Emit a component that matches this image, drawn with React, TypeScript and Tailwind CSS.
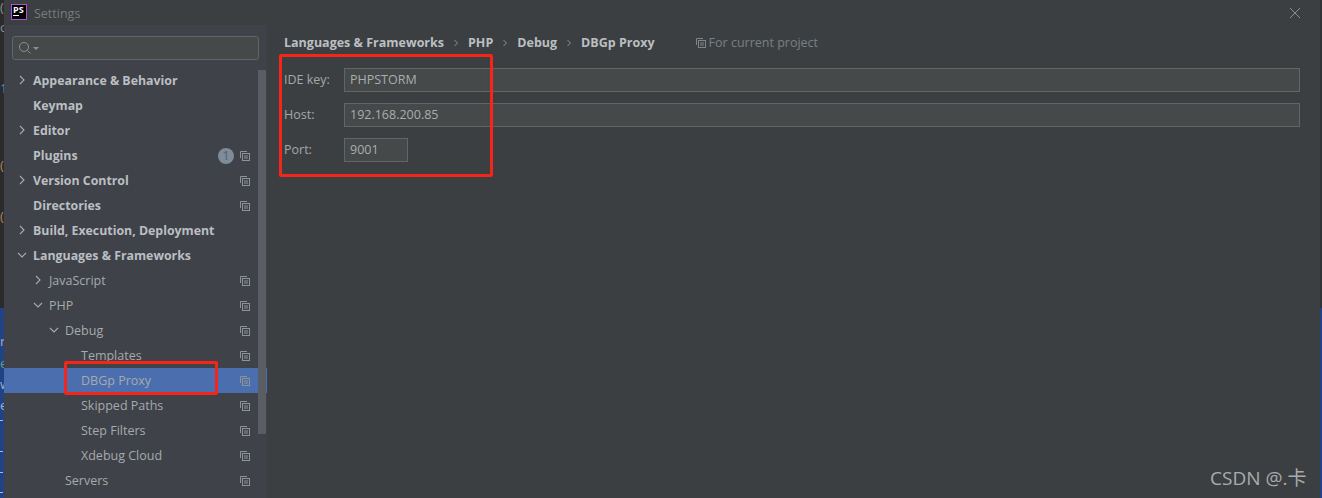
type Row = {
  label: string;
  indent: number;
  bold?: boolean;
  arrow?: "right" | "down";
  copy?: boolean;
  badge?: string;
  selected?: boolean;
};

const rows: Row[] = [
  { label: "Appearance & Behavior", indent: 33, bold: true, arrow: "right" },
  { label: "Keymap", indent: 33, bold: true },
  { label: "Editor", indent: 33, bold: true, arrow: "right" },
  { label: "Plugins", indent: 33, bold: true, copy: true, badge: "1" },
  { label: "Version Control", indent: 33, bold: true, arrow: "right", copy: true },
  { label: "Directories", indent: 33, bold: true, copy: true },
  { label: "Build, Execution, Deployment", indent: 33, bold: true, arrow: "right" },
  { label: "Languages & Frameworks", indent: 33, bold: true, arrow: "down" },
  { label: "JavaScript", indent: 49, arrow: "right", copy: true },
  { label: "PHP", indent: 49, arrow: "down", copy: true },
  { label: "Debug", indent: 65, arrow: "down", copy: true },
  { label: "Templates", indent: 81, copy: true },
  { label: "DBGp Proxy", indent: 81, copy: true, selected: true },
  { label: "Skipped Paths", indent: 81, copy: true },
  { label: "Step Filters", indent: 81, copy: true },
  { label: "Xdebug Cloud", indent: 81, copy: true },
  { label: "Servers", indent: 65, copy: true },
];

// editor text cut off by the dialog's left edge
const editorBits = [
  { top: -2, text: "(", color: "text-[#8a8f92]" },
  { top: 18, text: "c", color: "text-[#8a8f92]" },
  { top: 79, text: "1", color: "text-[#5f8fb5]" },
  { top: 156, text: "(", color: "text-[#b5835a]" },
  { top: 207, text: "(", color: "text-[#b5835a]" },
  { top: 332, text: "r", color: "text-[#b9a6b5]" },
  { top: 354, text: "e", color: "text-[#6a9a7a]" },
  { top: 375, text: "w", color: "text-[#9fb0d0]" },
  { top: 396, text: "e", color: "text-[#9fb0d0]" },
];

function CopyIcon({ className }: { className?: string }) {
  return (
    <svg width="10" height="10" viewBox="0 0 10 10" fill="none" stroke="currentColor" strokeWidth="1" className={className}>
      <path d="M0.5 7V0.5H7" />
      <rect x="2.5" y="2.5" width="7" height="7" />
      <path d="M4 5h4M4 7h4" />
    </svg>
  );
}

function Chevron({ dir }: { dir: "right" | "down" }) {
  return (
    <svg width="10" height="10" viewBox="0 0 10 10" fill="none" stroke="#a8acae" strokeWidth="1.1">
      {dir === "right" ? <path d="M3 1l4 4-4 4" /> : <path d="M1 3l4 4 4-4" />}
    </svg>
  );
}

function Sep() {
  return (
    <svg width="6" height="8" viewBox="0 0 6 8" fill="none" stroke="#8b8e90" strokeWidth="1" className="mx-[9px]">
      <path d="M1.5 1l3 3-3 3" />
    </svg>
  );
}

function TreeRow({ row }: { row: Row }) {
  return (
    <div className={`relative flex h-[25px] items-center ${row.selected ? "bg-[#4b6eaf]" : ""}`}>
      {row.arrow && (
        <span className="absolute top-[7px] flex" style={{ left: row.indent - 20 }}>
          <Chevron dir={row.arrow} />
        </span>
      )}
      <span
        className={`whitespace-nowrap pt-[2px] ${row.bold ? "text-[12.35px] font-bold text-[#bbbfc2]" : "text-[12.5px] text-[#a6aaac]"}`}
        style={{ marginLeft: row.indent - 4 }}
      >
        {row.label}
      </span>
      <span className="ml-auto mr-[17px] flex items-center gap-[6px]">
        {row.badge && (
          <span className="flex h-4 w-4 items-center justify-center rounded-full bg-[#7f8b96] text-[12px] leading-none text-[#4a6078]">
            {row.badge}
          </span>
        )}
        {row.copy && <CopyIcon className="text-[#8e9397]" />}
      </span>
    </div>
  );
}

function Field({ label, value, width }: { label: string; value: string; width?: string }) {
  return (
    <div className="flex items-center">
      <span className="w-[60px] text-[12.5px] text-[#a4a8aa]">{label}</span>
      <div className={`flex h-6 items-center border border-[#646464] bg-[#45494a] pl-[5px] text-[12.5px] text-[#a9adaf] ${width ?? "flex-1"}`}>
        {value}
      </div>
    </div>
  );
}

export default function App() {
  return (
    <div className="relative flex h-[498px] w-[1322px] overflow-hidden bg-[#3c3f41] font-['Open_Sans','Noto_Sans_CJK_SC',sans-serif]">
      {/* editor showing behind the dialog */}
      <div className="relative flex w-1 shrink-0 flex-col overflow-hidden">
        <div className="h-[308px] bg-[#2b2b2b]" />
        <div className="flex-1 bg-[#214283]" />
        {editorBits.map((b) => (
          <span key={b.top} className={`absolute left-0 text-[13px] leading-[18px] ${b.color}`} style={{ top: b.top }}>
            {b.text}
          </span>
        ))}
        {[420, 451, 472, 492].map((y) => (
          <span key={y} className="absolute left-0 h-px w-[3px] bg-[#a9b7d6]" style={{ top: y }} />
        ))}
      </div>

      <div className="flex min-w-0 flex-1 flex-col">
        <div className="flex h-[25px] shrink-0 items-center">
          <div className="mb-[1px] ml-[7px] flex h-4 w-4 flex-col border border-[#b150e0] bg-black px-px pt-px">
            <span className="text-[9px] font-bold leading-[8px] text-white">PS</span>
            <span className="mt-px h-px w-[6px] bg-white" />
          </div>
          <span className="ml-[7px] pt-[3px] text-[12.5px] text-[#787b7d]">Settings</span>
          <svg width="12" height="12" viewBox="0 0 12 12" stroke="#8b8e90" strokeWidth="1" className="ml-auto mr-[19px]">
            <path d="M1 1l10 10M11 1L1 11" />
          </svg>
        </div>

        <div className="flex min-h-0 flex-1">
          <aside className="relative w-[263px] shrink-0 overflow-hidden bg-[#3f4249]">
            <div className="ml-2 mt-[11px] flex h-6 w-[247px] items-center rounded-[3px] border border-[#646464] bg-[#45494a] pl-[5px]">
              <svg width="14" height="14" viewBox="0 0 14 14" fill="none" stroke="#8d9092" strokeWidth="1">
                <circle cx="6" cy="6" r="4.5" />
                <path d="M9.5 9.5l3 3" />
              </svg>
              <span className="ml-px border-x-[3px] border-t-[3px] border-x-transparent border-t-[#8d9092]" />
            </div>
            <div className="mt-2">
              {rows.map((r) => (
                <TreeRow key={r.label} row={r} />
              ))}
            </div>
            <div className="absolute left-[254px] top-[45px] h-[364px] w-2 bg-[#5a5d64]" />
          </aside>

          <main className="min-w-0 flex-1 pl-[17px] pr-[20px]">
            <div className="mt-[9px] flex h-[18px] items-center text-[12.5px]">
              <span className="font-bold text-[#bbbfc2]">Languages &amp; Frameworks</span>
              <Sep />
              <span className="font-bold text-[#bbbfc2]">PHP</span>
              <Sep />
              <span className="font-bold text-[#bbbfc2]">Debug</span>
              <Sep />
              <span className="font-bold text-[#bbbfc2]">DBGp Proxy</span>
              <CopyIcon className="ml-[41px] text-[#7f8588]" />
              <span className="ml-[3px] text-[#7a7f83]">For current project</span>
            </div>
            <div className="mt-[16px] flex flex-col gap-[11px]">
              <Field label="IDE key:" value="PHPSTORM" />
              <Field label="Host:" value="192.168.200.85" />
              <Field label="Port:" value="9001" width="w-16" />
            </div>
          </main>
        </div>
      </div>

      <div className="flex w-[2px] shrink-0 flex-col">
        <div className="h-[308px] bg-[#313335]" />
        <div className="flex-1 bg-[#214283]" />
      </div>

      {/* red annotations */}
      <div className="absolute left-[279px] top-[54px] h-[123px] w-[214px] rounded-[2px] border-[3px] border-[#f5251a]" />
      <div className="absolute left-[64px] top-[361px] h-[34px] w-[154px] rounded-[2px] border-[3px] border-[#f5251a]" />
      <span className="absolute left-[1210px] top-[466px] text-[19px] leading-6 text-[#a9acae]">CSDN @.卡</span>
    </div>
  );
}
